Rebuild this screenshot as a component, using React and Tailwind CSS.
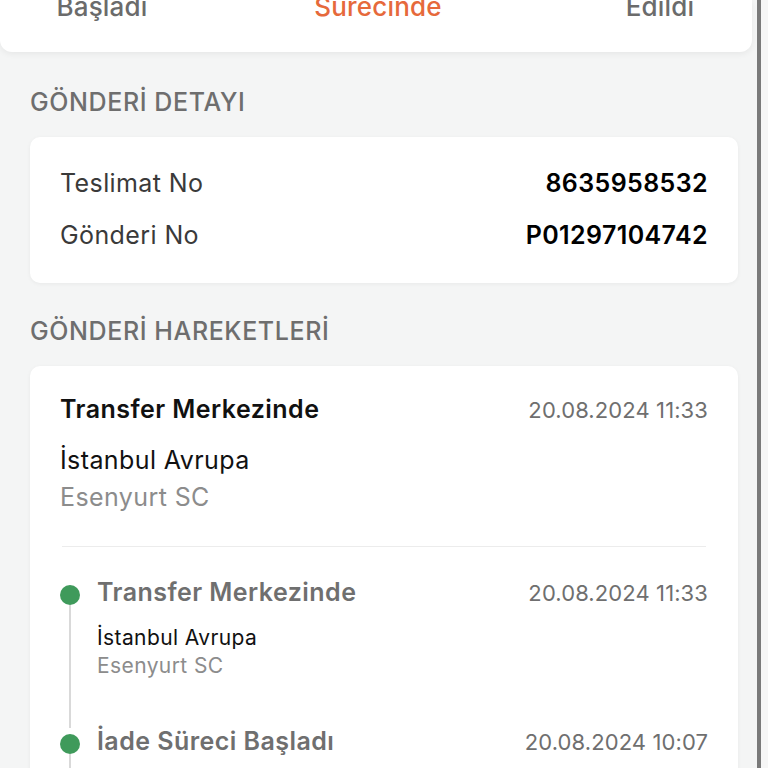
import React from "react";

const font = { fontFamily: "Inter, 'Noto Sans', sans-serif" };

function TimelineItem({ title, date, city, branch, last }) {
  return (
    <div className="flex gap-[17px]">
      <div className="flex w-[20px] flex-col items-center">
        <div className="mt-[6px] h-[20px] w-[20px] shrink-0 rounded-full bg-[#3f9a5b]" />
        <div className="w-[1.5px] flex-1 bg-[#d9d9d9]" />
      </div>
      <div className={last ? "flex-1 pb-[60px]" : "flex-1 pb-[49px]"}>
        <div className="flex h-[28px] items-center justify-between">
          <span className="text-[25px] font-semibold tracking-[0.45px] text-[#6f6f6f]">{title}</span>
          <span className="text-[22px] tracking-[0.1px] text-[#6f6f6f]">{date}</span>
        </div>
        <div className="mt-[18px] text-[21px] leading-[26px] tracking-[0.4px] text-[#111]">{city}</div>
        <div className="mt-[2px] text-[21px] leading-[26px] tracking-[0.4px] text-[#8c8c8c]">{branch}</div>
      </div>
    </div>
  );
}

export default function App() {
  return (
    <div className="flex h-[768px] w-[768px] overflow-hidden bg-[#f6f6f6]" style={font}>
      <div className="w-[757px] shrink-0 bg-[#f4f5f5]">
        <div className="mr-[5px] h-[52px] overflow-hidden rounded-b-[12px] bg-white shadow-[0_2px_6px_rgba(0,0,0,0.06)]">
          <div className="-mt-[8px] grid grid-cols-[204px_348px_1fr] text-[26px] font-medium leading-[30px] tracking-[0.2px]">
            <div className="text-center text-[#6b6b6b]">Başladı</div>
            <div className="text-center text-[#e6693b]">Sürecinde</div>
            <div className="pl-[16px] text-center text-[#6b6b6b]">Edildi</div>
          </div>
        </div>

        <div className="pl-[30px] pr-[19px]">
          <div className="mt-[36px] text-[25px] font-medium leading-[28px] tracking-[0.6px] text-[#6e6e6e]">GÖNDERİ DETAYI</div>
          <div className="mt-[21px] flex flex-col gap-[16px] rounded-[10px] bg-white px-[30px] py-[29px] shadow-[0_1px_4px_rgba(0,0,0,0.05)]">
            <div className="flex h-[36px] items-center justify-between text-[25px] tracking-[0.4px]">
              <span className="text-[#3a3a3a]">Teslimat No</span>
              <span className="font-semibold text-black">8635958532</span>
            </div>
            <div className="flex h-[36px] items-center justify-between text-[25px] tracking-[0.4px]">
              <span className="text-[#3a3a3a]">Gönderi No</span>
              <span className="font-semibold text-black">P01297104742</span>
            </div>
          </div>

          <div className="mt-[34px] text-[25px] font-medium leading-[28px] tracking-[0.6px] text-[#6e6e6e]">GÖNDERİ HAREKETLERİ</div>
          <div className="mt-[21px] rounded-t-[10px] bg-white px-[30px] pt-[30px] shadow-[0_1px_4px_rgba(0,0,0,0.05)]">
            <div className="flex h-[28px] items-center justify-between">
              <span className="text-[25px] font-semibold tracking-[0.45px] text-[#111]">Transfer Merkezinde</span>
              <span className="text-[22px] tracking-[0.1px] text-[#6f6f6f]">20.08.2024 11:33</span>
            </div>
            <div className="mt-[21px] text-[25px] leading-[30px] tracking-[0.4px] text-[#111]">İstanbul Avrupa</div>
            <div className="mt-[7px] text-[25px] leading-[30px] tracking-[0.4px] text-[#8c8c8c]">Esenyurt SC</div>
            <div className="mx-[2px] mt-[34px] h-px bg-[#ececec]" />
            <div className="mt-[32px]">
              <TimelineItem title="Transfer Merkezinde" date="20.08.2024 11:33" city="İstanbul Avrupa" branch="Esenyurt SC" />
              <TimelineItem title="İade Süreci Başladı" date="20.08.2024 10:07" city="İstanbul Avrupa" branch="Esenyurt SC" last />
            </div>
          </div>
        </div>
      </div>
      <div className="w-[4px] shrink-0 bg-[#7a7a7a]" />
      <div className="flex-1 bg-[#f6f6f6]" />
    </div>
  );
}
